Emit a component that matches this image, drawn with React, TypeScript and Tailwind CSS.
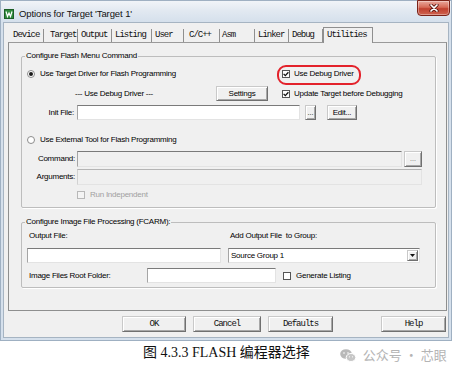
import React from "react";

const Radio = ({ on }: { on?: boolean }) => (
  <span className="w-[8px] h-[8px] rounded-full border border-[#8c8c8c] bg-white flex items-center justify-center shrink-0">
    {on && <span className="w-[4px] h-[4px] rounded-full bg-[#1a1a1a]" />}
  </span>
);

const Check = ({ on, disabled }: { on?: boolean; disabled?: boolean }) => (
  <span
    className={
      "w-[8px] h-[8px] border flex items-center justify-center shrink-0 " +
      (disabled ? "border-[#b8b8b8] bg-[#f4f4f4]" : "border-[#555] bg-white")
    }
  >
    {on && (
      <svg width="6" height="6" viewBox="0 0 6 6">
        <path d="M0.6 2.9 L2.3 4.6 L5.4 1.2" fill="none" stroke="#111" strokeWidth="1.3" />
      </svg>
    )}
  </span>
);

const Btn = ({ children, className }: { children?: React.ReactNode; className?: string }) => (
  <div
    className={
      "bg-[#f0f0f0] border border-[#707070] border-t-[#c9c9c9] border-l-[#c9c9c9] shadow-[inset_1px_1px_0_#ffffff,inset_-1px_-1px_0_#a8a8a8] flex items-center justify-center leading-[10px] " +
      (className || "")
    }
  >
    {children}
  </div>
);

const Input = ({ className, disabled, light }: { className?: string; disabled?: boolean; light?: boolean }) => (
  <div
    className={
      "border border-[#e3e3e3] " +
      (light ? "border-t-[#b4b4b4] border-l-[#d2d2d2] " : "border-t-[#7a7a7a] border-l-[#a5a5a5] ") +
      (disabled ? "bg-[#f0f0f0] " : "bg-white ") +
      (className || "")
    }
  />
);

const tabs: { t: string; w: string; pl: string }[] = [
  { t: "Device", w: "w-[35px]", pl: "pl-[4px]" },
  { t: "Target", w: "w-[34px]", pl: "pl-[6px]" },
  { t: "Output", w: "w-[34px]", pl: "pl-[3px]" },
  { t: "Listing", w: "w-[40px]", pl: "pl-[3px]" },
  { t: "User", w: "w-[32px]", pl: "pl-[3px]" },
  { t: "C/C++", w: "w-[36px]", pl: "pl-[5px]" },
  { t: "Asm", w: "w-[35px]", pl: "pl-[2px]" },
  { t: "Linker", w: "w-[34px]", pl: "pl-[3px]" },
  { t: "Debug", w: "w-[34px]", pl: "pl-[3px]" },
];

const mono = "font-['Liberation_Mono','Courier_New',monospace] text-[9px] tracking-[-1px] text-[#111]";

export default function App() {
  return (
    <div className="w-[459px] h-[373px] bg-white overflow-hidden font-['Liberation_Sans',Arial,sans-serif] text-[8px] tracking-[-0.25px] text-black">
      {/* window */}
      <div className="w-[452px] h-[341px] border border-[#9fb0c2] bg-[#d5e0ec] flex flex-col">
        {/* title bar */}
        <div className="h-[21px] flex items-start bg-[linear-gradient(180deg,#f1f4f8_0%,#e2e9f1_45%,#d5e0ec_100%)]">
          <svg className="ml-[3px] mt-[8px] shrink-0" width="10" height="10" viewBox="0 0 10 10">
            <rect x="0" y="0" width="10" height="10" fill="#2f8a3c" />
            <rect x="0.5" y="0.5" width="9" height="9" fill="none" stroke="#1c5e26" strokeWidth="1" />
            <path d="M2 2.5 L3.5 7.5 L5 4 L6.5 7.5 L8 2.5" fill="none" stroke="#ffffff" strokeWidth="1.2" />
          </svg>
          <div className="ml-[5px] mt-[7px] leading-[12px] text-[9.5px] tracking-[-0.1px] text-[#111]">
            Options for Target 'Target 1'
          </div>
          <div className="ml-auto mr-px -mt-px h-[16px] w-[33px] rounded-b-[4px] border border-[#7a2218] bg-[linear-gradient(180deg,#e9a89c_0%,#d66a57_45%,#c0402f_55%,#cf6450_100%)] flex items-center justify-center shadow-[inset_0_0_0_1px_rgba(255,255,255,0.35)]">
            <svg width="10" height="8" viewBox="0 0 10 8">
              <path d="M2 1 L8 7 M8 1 L2 7" stroke="#5a1610" strokeWidth="3.2" strokeLinecap="round" />
              <path d="M2 1 L8 7 M8 1 L2 7" stroke="#ffffff" strokeWidth="1.7" strokeLinecap="round" />
            </svg>
          </div>
        </div>

        {/* client */}
        <div className="flex-1 mx-[2px] mb-[2px] bg-[#f0f0f0] border border-[#a6b4c2] flex flex-col">
          {/* tabs */}
          <div className={"flex items-end h-[15px] mt-[4px] ml-[5px] " + mono}>
            {tabs.map((tb) => (
              <div key={tb.t} className={"h-[13px] border-r border-[#8f8f8f] leading-[13px] whitespace-nowrap " + tb.w + " " + tb.pl}>
                {tb.t}
              </div>
            ))}
            <div className="h-[16px] w-[50px] -mb-px relative z-10 bg-[#f0f0f0] border border-b-0 border-[#8f8f8f] pl-[3px] leading-[14px] whitespace-nowrap">
              Utilities
            </div>
          </div>

          {/* pane */}
          <div className="ml-[4px] mr-px h-[269px] border border-[#8e8f8f] border-t-[#9a9a9a] bg-[#f0f0f0]">
            {/* group 1 */}
            <fieldset className="ml-[12px] mt-[8px] w-[415px] border border-[#bdbdbd] rounded-[2px] shadow-[1px_1px_0_#ffffff]">
              <legend className="ml-[3px] px-[1px] leading-[10px]">Configure Flash Menu Command</legend>
              <div className="flex flex-col pb-[6px]">
                <div className="flex items-center h-[12px] mt-[7px]">
                  <div className="w-[260px] flex items-center">
                    <span className="ml-[5px]"><Radio on /></span>
                    <span className="ml-[5px] leading-[10px]">Use Target Driver for Flash Programming</span>
                  </div>
                  <div className="relative flex items-center">
                    <span className="absolute -left-[5px] -top-[4px] w-[84px] h-[20px] border-2 border-[#e3222b] rounded-[9px]" />
                    <Check on />
                    <span className="ml-[4px] leading-[10px]">Use Debug Driver</span>
                  </div>
                </div>
                <div className="flex items-center h-[15px] mt-[6px]">
                  <div className="w-[194px] pl-[53px] leading-[10px] whitespace-nowrap">--- Use Debug Driver ---</div>
                  <Btn className="w-[52px] h-[15px]">Settings</Btn>
                  <span className="ml-[14px]"><Check on /></span>
                  <span className="ml-[4px] leading-[10px]">Update Target before Debugging</span>
                </div>
                <div className="flex items-center h-[15px] mt-[4px]">
                  <div className="w-[55px] pr-[3px] text-right leading-[10px]">Init File:</div>
                  <Input className="w-[223px] h-[15px]" />
                  <Btn className="ml-[5px] w-[11px] h-[15px] text-[7px] tracking-[0px]">...</Btn>
                  <Btn className="ml-[11px] w-[30px] h-[15px]">Edit...</Btn>
                </div>
                <div className="flex items-center h-[12px] mt-[14px]">
                  <span className="ml-[5px]"><Radio /></span>
                  <span className="ml-[5px] leading-[10px]">Use External Tool for Flash Programming</span>
                </div>
                <div className="flex items-center h-[16px] mt-[5px]">
                  <div className="w-[55px] pr-[2px] text-right leading-[10px]">Command:</div>
                  <Input className="w-[325px] h-[16px]" disabled />
                  <Btn className="ml-[2px] w-[18px] h-[16px] text-[7px] tracking-[0px] text-[#666]">...</Btn>
                </div>
                <div className="flex items-center h-[16px] mt-[2px]">
                  <div className="w-[55px] pr-[2px] text-right leading-[10px]">Arguments:</div>
                  <Input className="w-[345px] h-[16px]" disabled light />
                </div>
                <div className="flex items-center h-[12px] mt-[4px]">
                  <span className="ml-[55px]"><Check disabled /></span>
                  <span className="ml-[5px] leading-[10px] text-[#a0a0a0]">Run Independent</span>
                </div>
              </div>
            </fieldset>

            {/* group 2 */}
            <fieldset className="ml-[12px] mt-[9px] w-[415px] border border-[#bdbdbd] rounded-[2px] shadow-[1px_1px_0_#ffffff]">
              <legend className="ml-[3px] px-[1px] leading-[10px]">Configure Image File Processing (FCARM):</legend>
              <div className="flex flex-col pb-[4px]">
                <div className="flex items-center h-[12px] mt-[3px]">
                  <div className="w-[208px] pl-[7px] leading-[10px]">Output File:</div>
                  <div className="leading-[10px] whitespace-pre">Add Output File  to Group:</div>
                </div>
                <div className="flex items-center h-[15px] mt-[6px]">
                  <Input className="ml-[5px] w-[194px] h-[15px]" />
                  <div className="ml-[7px] w-[192px] h-[15px] bg-white border border-[#e3e3e3] border-t-[#7a7a7a] border-l-[#a5a5a5] flex items-center">
                    <span className="ml-[2px] leading-[10px]">Source Group 1</span>
                    <Btn className="ml-auto w-[11px] h-[11px] mr-px">
                      <svg width="5" height="3" viewBox="0 0 5 3">
                        <path d="M0 0 L5 0 L2.5 3 Z" fill="#111" />
                      </svg>
                    </Btn>
                  </div>
                </div>
                <div className="flex items-center h-[15px] mt-[5px]">
                  <div className="w-[125px] pl-[7px] leading-[10px]">Image Files Root Folder:</div>
                  <Input className="w-[129px] h-[15px]" />
                  <span className="ml-[7px]"><Check /></span>
                  <span className="ml-[5px] leading-[10px]">Generate Listing</span>
                </div>
              </div>
            </fieldset>
          </div>

          {/* buttons */}
          <div className={"flex items-center mt-[5px] " + mono}>
            <Btn className="ml-[118px] w-[64px] h-[16px]">OK</Btn>
            <Btn className="ml-[7px] w-[68px] h-[16px]">Cancel</Btn>
            <Btn className="ml-[7px] w-[65px] h-[16px]">Defaults</Btn>
            <Btn className="ml-[48px] w-[65px] h-[16px]">Help</Btn>
          </div>
        </div>
      </div>

      {/* caption */}
      <div className="flex items-center h-[24px]">
        <div className="ml-[143px] text-[14px] tracking-[0px] leading-[16px] text-[#111] whitespace-nowrap font-['Liberation_Serif','Times_New_Roman','Noto_Sans_CJK_SC',serif]">
          图 4.3.3 FLASH 编程器选择
        </div>
        <div className="ml-[30px] mt-[4px] flex items-center text-[#b4b4b4] text-[13px] tracking-[0px] leading-[16px] font-['Noto_Sans_CJK_SC','Noto_Sans',sans-serif] whitespace-nowrap">
          <svg width="16" height="13" viewBox="0 0 16 13">
            <ellipse cx="6" cy="5" rx="5.8" ry="4.8" fill="#b9b9b9" />
            <circle cx="4" cy="4" r="0.8" fill="#fff" />
            <circle cx="8" cy="4" r="0.8" fill="#fff" />
            <ellipse cx="11" cy="8.5" rx="4.8" ry="4" fill="#c6c6c6" stroke="#fff" strokeWidth="1" />
            <circle cx="9.5" cy="7.8" r="0.6" fill="#fff" />
            <circle cx="12.5" cy="7.8" r="0.6" fill="#fff" />
          </svg>
          <span className="ml-[7px]">公众号 · 芯眼</span>
        </div>
      </div>
    </div>
  );
}
